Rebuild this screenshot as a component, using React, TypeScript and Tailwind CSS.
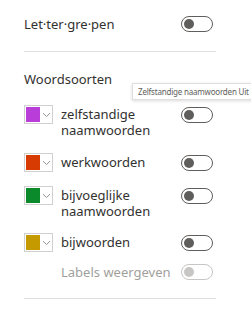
import React from 'react'

type Kind = { label: string; color: string }

const kinds: Kind[] = [
  { label: 'zelfstandige naamwoorden', color: '#b83dd9' },
  { label: 'werkwoorden', color: '#d83b01' },
  { label: 'bijvoeglijke naamwoorden', color: '#0b8a2c' },
  { label: 'bijwoorden', color: '#c49a00' },
]

function Toggle({ disabled }: { disabled?: boolean }) {
  return (
    <div
      className={`w-8 h-4 rounded-full border flex items-center pl-[2px] shrink-0 ${
        disabled ? 'border-[#c8c6c4]' : 'border-[#605e5c]'
      }`}
    >
      <span className={`w-[10px] h-[10px] rounded-full ${disabled ? 'bg-[#c8c6c4]' : 'bg-[#605e5c]'}`} />
    </div>
  )
}

function Swatch({ color }: { color: string }) {
  return (
    <div className="w-[29px] h-[19px] border border-[#d2d0ce] flex items-center pl-px shrink-0 bg-white">
      <span className="w-[14px] h-[15px]" style={{ background: color }} />
      <svg width="9" height="6" viewBox="0 0 9 6" className="ml-[2px]">
        <path d="M1 1.2 L4.5 4.5 L8 1.2" fill="none" stroke="#8a8886" strokeWidth="0.9" />
      </svg>
    </div>
  )
}

export default function App() {
  return (
    <div
      className="relative w-[251px] h-[309px] bg-white overflow-hidden text-[#323130] text-[13px] leading-4"
      style={{ fontFamily: '"Segoe UI", "Noto Sans", sans-serif' }}
    >
      <div className="pl-6 pt-4">
        <div className="w-[189px] flex items-center justify-between">
          <span>Let·ter·gre·pen</span>
          <Toggle />
        </div>
        <div className="w-[192px] h-px bg-[#e1dfdd] mt-[19px]" />

        <div className="mt-[19px]">Woordsoorten</div>

        <div className="mt-[18px] flex flex-col">
          {kinds.map((k, i) => (
            <div
              key={k.color}
              className={`w-[189px] flex items-start ${i === 0 ? '' : i === 1 ? 'mt-[15px]' : 'mt-[14px]'}`}
            >
              <Swatch color={k.color} />
              <div className="ml-2 mt-px flex-1 pr-2">{k.label}</div>
              <div className="h-[19px] flex items-center">
                <Toggle />
              </div>
            </div>
          ))}
          <div className="w-[189px] flex items-center mt-3 text-[#a19f9d]">
            <span className="ml-[37px] flex-1">Labels weergeven</span>
            <Toggle disabled />
          </div>
        </div>

        <div className="w-[192px] h-px bg-[#e1dfdd] mt-[18px]" />
      </div>

      <div className="absolute left-[132px] top-[83px] w-[122px] h-[17px] bg-white border border-[#e1dfdd] shadow-[0_1px_3px_rgba(0,0,0,0.15)] pl-[5px] flex items-center text-[8px] tracking-[-0.2px] text-[#605e5c] whitespace-nowrap">
        Zelfstandige naamwoorden Uit
      </div>
    </div>
  )
}
